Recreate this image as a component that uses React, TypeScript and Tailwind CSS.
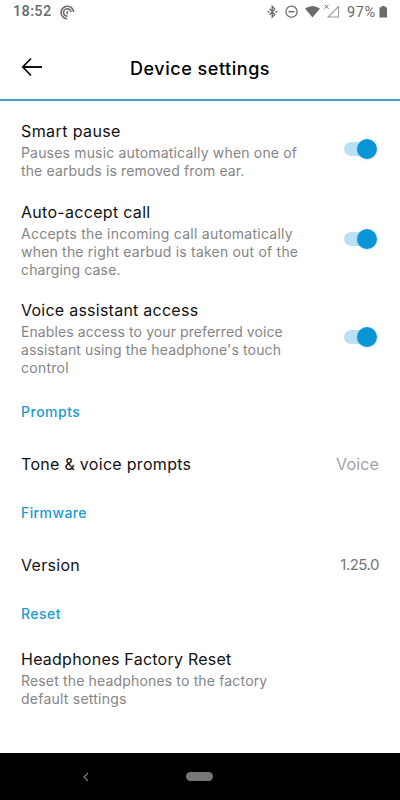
import React from "react";

function Toggle() {
  return (
    <span className="relative mb-1 block h-5 w-[33px] shrink-0" role="switch" aria-checked="true">
      <span className="absolute left-0 top-[3px] h-[14px] w-[28px] rounded-full bg-[#b9e1f3]" />
      <span className="absolute right-0 top-0 size-5 rounded-full bg-[#0a95d9] shadow-[0_1px_2px_rgba(0,90,140,0.2)]" />
    </span>
  );
}

type Line = { text: string; cls: string };

function Setting({ title, titleCls, lines, toggle }: { title: string; titleCls: string; lines: Line[]; toggle?: boolean }) {
  return (
    <div className="flex items-center justify-between pl-[21px] pr-[23px]">
      <div className="whitespace-nowrap">
        <h2 className={"text-[16px] leading-5 text-[#111] " + titleCls}>{title}</h2>
        <div className="mt-[3px] text-[14px] leading-[18px] text-[#858585]">
          {lines.map((l) => (
            <p key={l.text} className={l.cls}>{l.text}</p>
          ))}
        </div>
      </div>
      {toggle && <Toggle />}
    </div>
  );
}

function StatusBar() {
  return (
    <div className="flex h-6 items-center pl-[13px] font-[Roboto,sans-serif] text-[14px] text-[#6b6b6b]">
      <span className="w-[38px] whitespace-nowrap text-[14.5px] font-medium tracking-[0.35px]">18:52</span>
      <svg className="ml-[9px]" width="15" height="15" viewBox="0 0 15 15" fill="none" stroke="#6b6b6b" strokeWidth="1.6">
        <path d="M7.200 13.800A6.300 6.300 0 1 1 13.700 7" />
        <path d="M7.400 11.100A3.700 3.700 0 1 1 11 7" />
        <path d="M7.800 8.700A1.300 1.300 0 0 1 8.200 6.300" />
      </svg>
      <svg className="ml-auto" width="133" height="24" viewBox="0 0 133 24" fill="none" stroke="#6b6b6b">
        <path d="M2.600 8.800L7.800 14.400L5.200 17.200V6.300L7.800 9.100L2.600 14.700" strokeWidth="1.3" />
        <path d="M.4 11.800h1.900M8.400 11.800h2" strokeWidth="1.5" />
        <circle cx="24.500" cy="11.700" r="5.600" strokeWidth="1.300" />
        <path d="M21.500 11.700h6" strokeWidth="1.4" />
        <path d="M38 8.600Q45.500 3.200 53 8.600L45.500 17.600Z" fill="#6b6b6b" stroke="none" />
        <path d="M57.500 4.700l4 4m0-4l-4 4" strokeWidth="1" />
        <path d="M71.500 6.500V17H61Z" strokeWidth="1.1" stroke="#999" />
        <path d="M112.500 7.200h2V6h3.500v1.200h2v10.300h-7.500Z" fill="#6b6b6b" stroke="none" />
        <text x="80" y="16.900" fill="#6b6b6b" stroke="none" fontSize="14.500" textLength="28" lengthAdjust="spacing">97%</text>
      </svg>
    </div>
  );
}

export default function App() {
  return (
    <main className="flex h-[800px] w-[400px] flex-col overflow-hidden bg-white font-[Inter,sans-serif]">
      <StatusBar />
      <header className="flex h-[77px] items-center border-b-2 border-[#3d9fc6] pl-[21px]">
        <svg className="mt-[11px]" width="22" height="20" viewBox="0 0 22 20" fill="none" stroke="#111" strokeWidth="1.8">
          <path d="M21 10H2M10 1.500L1.800 10l8.200 8.500" />
        </svg>
        <h1 className="ml-[87px] mt-[15px] whitespace-nowrap text-[18px] font-medium leading-6 tracking-[0.53px] text-black">Device settings</h1>
      </header>

      <section className="flex flex-col gap-[21px] pt-5">
        <Setting
          title="Smart pause"
          titleCls="tracking-[0.4px]"
          toggle
          lines={[
            { text: "Pauses music automatically when one of", cls: "tracking-[0.18px]" },
            { text: "the earbuds is removed from ear.", cls: "tracking-[0.13px]" },
          ]}
        />
        <div className="pt-px">
          <Setting
            title="Auto-accept call"
            titleCls="tracking-[0.3px]"
            toggle
            lines={[
              { text: "Accepts the incoming call automatically", cls: "tracking-[0.25px]" },
              { text: "when the right earbud is taken out of the", cls: "tracking-[0.2px]" },
              { text: "charging case.", cls: "tracking-[0.15px]" },
            ]}
          />
        </div>
        <Setting
          title="Voice assistant access"
          titleCls="tracking-[0.25px]"
          toggle
          lines={[
            { text: "Enables access to your preferred voice", cls: "tracking-[0.09px]" },
            { text: "assistant using the headphone's touch", cls: "tracking-[0.14px]" },
            { text: "control", cls: "tracking-[0.25px]" },
          ]}
        />
      </section>

      <h3 className="mt-[25px] pl-[21px] text-[14px] font-medium leading-5 tracking-[0.5px] text-[#1b9ad2]">Prompts</h3>
      <div className="mt-8 flex items-center justify-between pl-[21px] pr-[21px] text-[16px] leading-5">
        <span className="tracking-[0.3px] text-[#111]">Tone &amp; voice prompts</span>
        <span className="tracking-[0.15px] text-[#a3a3a3]">Voice</span>
      </div>
      <h3 className="mt-[29px] pl-[21px] text-[14px] font-medium leading-5 tracking-[0.4px] text-[#1b9ad2]">Firmware</h3>
      <div className="mt-8 flex items-center justify-between pl-[21px] pr-[21px] text-[16px] leading-5">
        <span className="tracking-[0.3px] text-[#111]">Version</span>
        <span className="text-[15px] tracking-[-0.5px] text-[#777]">1.25.0</span>
      </div>
      <h3 className="mb-[25px] mt-[29px] pl-[21px] text-[14px] font-medium leading-5 tracking-[0.45px] text-[#1b9ad2]">Reset</h3>
      <Setting
        title="Headphones Factory Reset"
        titleCls="tracking-[0.24px]"
        lines={[
          { text: "Reset the headphones to the factory", cls: "tracking-[0.16px]" },
          { text: "default settings", cls: "tracking-[0.23px]" },
        ]}
      />

      <nav className="mt-auto flex h-[47px] items-center bg-black pl-[82px]">
        <svg width="8" height="10" viewBox="0 0 8 10" fill="none" stroke="#777" strokeWidth="1.3">
          <path d="M6 1L2 5l4 4" />
        </svg>
        <span className="ml-24 h-[9px] w-[27px] rounded-full bg-[#777]" />
      </nav>
    </main>
  );
}
